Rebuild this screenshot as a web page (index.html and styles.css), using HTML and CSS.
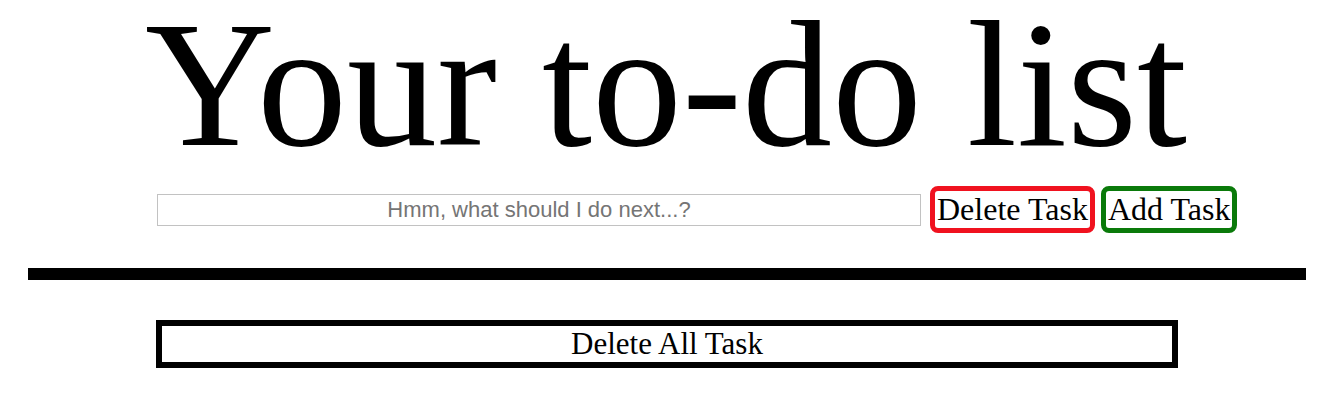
FILE: index.html
```html
<!DOCTYPE html>
<html lang="en">
<head>
<meta charset="utf-8">
<title>Your to-do list</title>
<link rel="stylesheet" href="styles.css">
</head>
<body>
  <h1 class="title">Your to-do list</h1>
  <div class="entry-row">
    <input class="task-input" type="text" placeholder="Hmm, what should I do next...?">
    <button class="btn btn-delete">Delete Task</button>
    <button class="btn btn-add">Add Task</button>
  </div>
  <div class="divider"></div>
  <div class="list-area">
    <button class="btn-delete-all">Delete All Task</button>
  </div>
</body>
</html>
```

FILE: styles.css
```css
body {
  margin: 0 8px 8px 8px;
  font-family: "Liberation Serif", "Times New Roman", serif;
  background: #fff;
  color: #000;
}

.title {
  margin: 0;
  font-weight: normal;
  font-size: 180px;
  line-height: 170px;
  text-align: center;
}

.entry-row {
  display: flex;
  align-items: center;
  margin-top: 16px;
  padding-left: 149px;
}

.task-input {
  box-sizing: border-box;
  width: 764px;
  height: 32px;
  margin: 0;
  border: 1px solid #c2c2c2;
  padding: 0 4px;
  font-family: "Liberation Sans", Arial, sans-serif;
  font-size: 22px;
  text-align: center;
  color: #333;
}

.task-input::placeholder {
  color: #757575;
}

.btn {
  box-sizing: border-box;
  height: 47px;
  margin: 0;
  padding: 0 2px;
  background: #fff;
  font-family: "Liberation Serif", "Times New Roman", serif;
  font-size: 32px;
  color: #000;
  border-radius: 8px;
  cursor: pointer;
}

.btn-delete {
  margin-left: 9px;
  border: 5px solid #f0121f;
}

.btn-add {
  margin-left: 6px;
  border: 5px solid #0a7a0a;
}

.divider {
  height: 12px;
  margin: 35px 18px 0 20px;
  background: #000;
}

.list-area {
  display: flex;
  justify-content: center;
  margin-top: 40px;
}

.btn-delete-all {
  box-sizing: border-box;
  width: 1022px;
  height: 48px;
  margin: 0 0 0 2px;
  padding: 0;
  border: 6px solid #000;
  background: #fff;
  font-family: "Liberation Serif", "Times New Roman", serif;
  font-size: 31px;
  color: #000;
  cursor: pointer;
}
```
